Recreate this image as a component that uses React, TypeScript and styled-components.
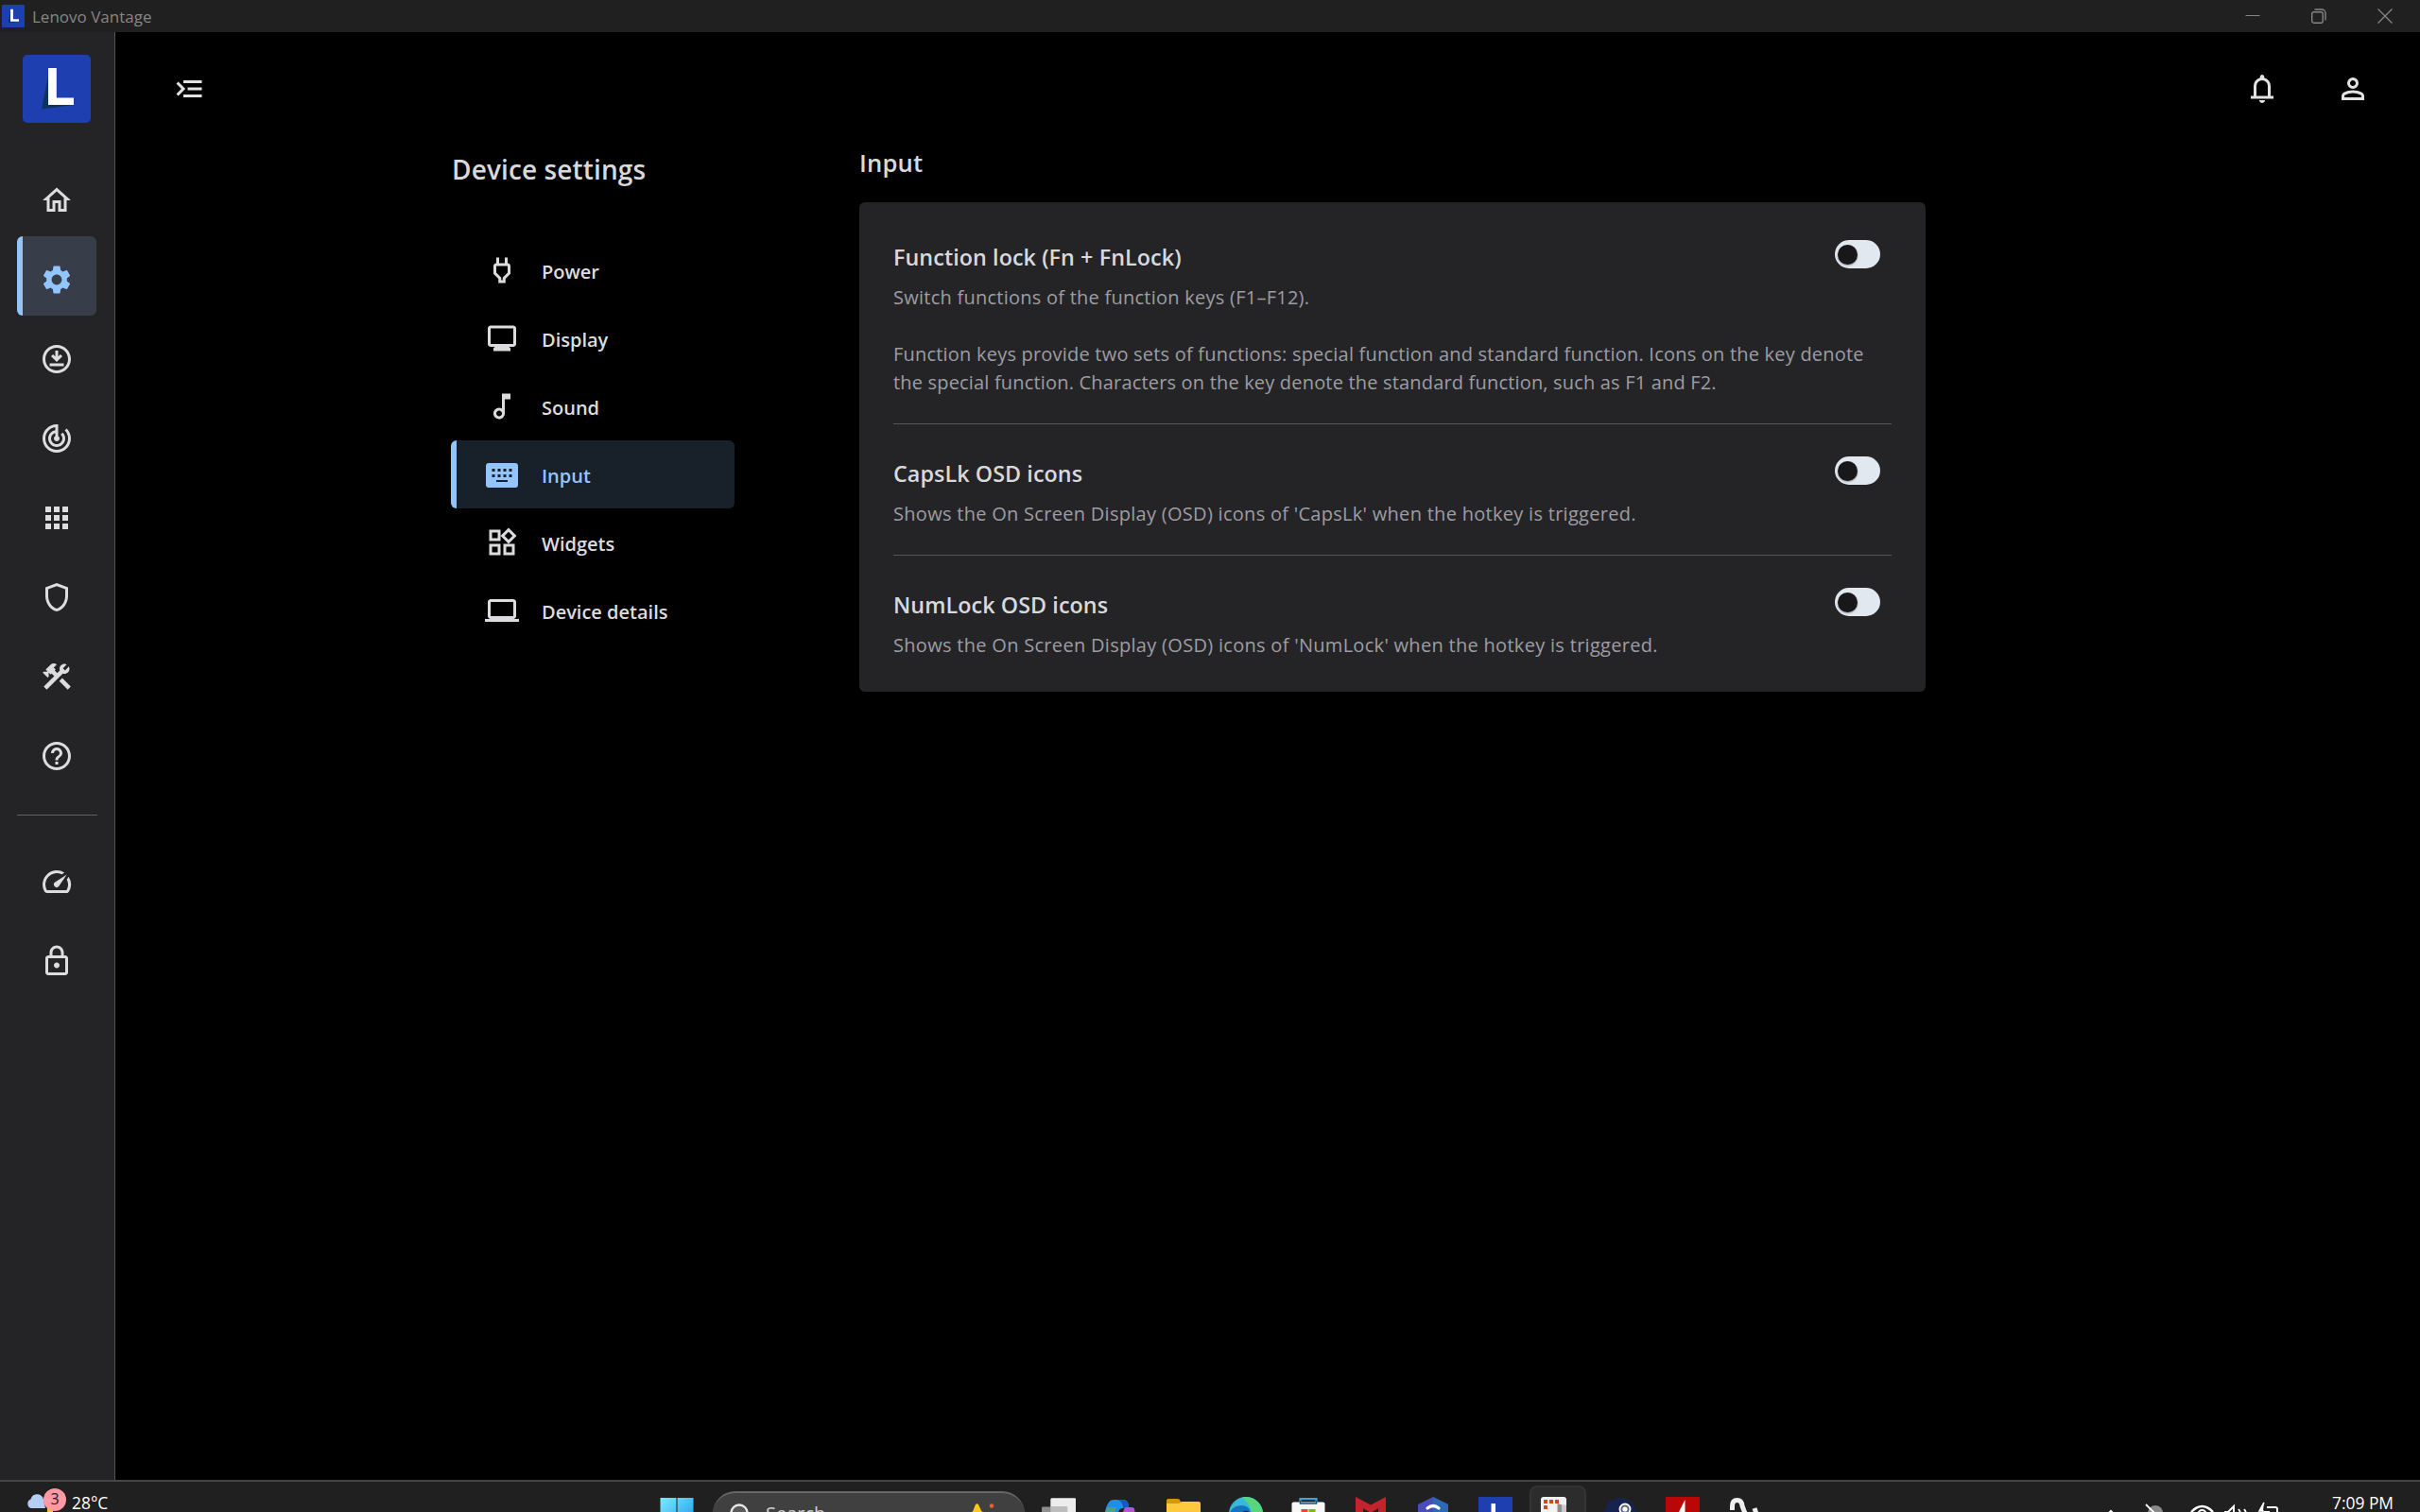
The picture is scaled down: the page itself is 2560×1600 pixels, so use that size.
import React from "react";
import styled, { createGlobalStyle, css } from "styled-components";
import {
  MdOutlineHome,
  MdSettings,
  MdOutlineDownloadForOffline,
  MdTrackChanges,
  MdApps,
  MdOutlineShield,
  MdOutlineConstruction,
  MdHelpOutline,
  MdMenuOpen,
  MdOutlinePower,
  MdOutlineMonitor,
  MdOutlineMusicNote,
  MdOutlineWidgets,
  MdOutlineLaptop,
} from "react-icons/md";

const GlobalStyle = createGlobalStyle`
  * { box-sizing: border-box; }
  body {
    margin: 0;
    background: #000;
    font-family: "Open Sans", "Noto Sans", sans-serif;
    overflow: hidden;
  }
`;

/* ---------- shell ---------- */

const Desktop = styled.div`
  width: 2560px;
  height: 1600px;
  display: flex;
  flex-direction: column;
  background: #000;
  color: #d9d9dc;
  overflow: hidden;
`;

const TitleBar = styled.header`
  flex: 0 0 34px;
  display: flex;
  align-items: center;
  justify-content: space-between;
  background: #202020;
  padding: 0 29px 0 2px;
`;

const TitleGroup = styled.div`
  display: flex;
  align-items: center;
  gap: 8px;
`;

const TitleText = styled.span`
  font-size: 17px;
  line-height: 32px;
  padding-top: 2px;
  color: #868686;
`;

const WindowControls = styled.div`
  display: flex;
  align-items: center;
  gap: 54px;
`;

const Body = styled.div`
  flex: 1;
  display: flex;
  min-height: 0;
`;

/* ---------- rail ---------- */

const Rail = styled.nav`
  flex: 0 0 122px;
  background: #242427;
  border-right: 1px solid #525254;
  display: flex;
  flex-direction: column;
  align-items: flex-start;
  padding: 24px 0 0 18px;
`;

const LogoTile = styled.div<{ $size: number; $radius: number }>`
  width: ${(p) => p.$size}px;
  height: ${(p) => p.$size}px;
  border-radius: ${(p) => p.$radius}px;
  background: #1e3faf;
  overflow: hidden;
  flex: none;

  svg {
    display: block;
  }
`;

const RailLogo = styled.div`
  padding: 0 6px;
  margin-bottom: 36px;
`;

const RailItem = styled.a<{ $active?: boolean }>`
  width: 84px;
  height: 84px;
  display: flex;
  align-items: center;
  justify-content: center;
  padding-top: 8px;
  border-radius: 6px;
  color: ${(p) => (p.$active ? "#93c5fd" : "#dddde0")};
  ${(p) =>
    p.$active &&
    css`
      background: linear-gradient(to right, #93c5fd 6px, #373e49 6px);
    `}
`;

const RailDivider = styled.hr`
  width: 85px;
  height: 1px;
  border: 0;
  margin: 24px 0;
  background: #606063;
`;

/* ---------- main ---------- */

const Main = styled.main`
  flex: 1;
  display: flex;
  flex-direction: column;
`;

const TopBar = styled.div`
  height: 120px;
  display: flex;
  align-items: center;
  justify-content: space-between;
  padding: 0 53px 0 60px;
  color: #e2e2e2;
`;

const MenuToggle = styled.span`
  display: flex;
  transform: scaleX(-1);
`;

const TopActions = styled.div`
  display: flex;
  gap: 60px;
`;

const Content = styled.div`
  display: flex;
  gap: 132px;
  padding-left: 355px;
`;

const SubNav = styled.aside`
  width: 300px;
  padding-top: 5px;
`;

const SubNavHeading = styled.h1`
  margin: 0 0 51px;
  padding-left: 1px;
  font-size: 28px;
  font-weight: 600;
  line-height: 40px;
  letter-spacing: 0.12px;
`;

const SubNavItem = styled.a<{ $active?: boolean }>`
  height: 72px;
  display: flex;
  align-items: center;
  gap: 24px;
  padding-left: 36px;
  border-radius: 6px;
  font-size: 20px;
  font-weight: 600;
  color: ${(p) => (p.$active ? "#93c5fd" : "#dcdcde")};
  ${(p) =>
    p.$active &&
    css`
      background: linear-gradient(to right, #93c5fd 6px, #182029 6px);
    `}

  span {
    padding-top: 3px;
  }
`;

const Panel = styled.section`
  width: 1128px;
`;

const PanelHeading = styled.h2`
  margin: 0 0 23px;
  padding: 1px 0 0;
  font-size: 25.6px;
  font-weight: 600;
  line-height: 36px;
  letter-spacing: 0.2px;
`;

const Card = styled.div`
  height: 518px;
  padding: 6px 36px 0;
  border-radius: 6px;
  background: #242427;
`;

const Setting = styled.div`
  display: flex;
  align-items: flex-start;
  justify-content: space-between;
  padding: 34px 0 28px;

  & + & {
    border-top: 1px solid #555558;
  }
`;

const SettingText = styled.div`
  flex: 1;
  width: 0;
  white-space: nowrap;
`;

const SettingTitle = styled.h3`
  margin: 0 0 10px;
  font-size: 23.3px;
  font-weight: 600;
  line-height: 36px;
  letter-spacing: 0.08px;
`;

const SettingLine = styled.p<{ $tracking: number; $gap?: boolean }>`
  margin: ${(p) => (p.$gap ? "30px 0 0" : "0")};
  font-size: 20px;
  line-height: 30px;
  letter-spacing: ${(p) => p.$tracking}px;
  color: #9d9da3;
`;

const Toggle = styled.button`
  flex: none;
  width: 48px;
  height: 30px;
  margin: 0 12px 0 0;
  padding: 0 3px;
  border: 0;
  border-radius: 15px;
  display: flex;
  align-items: center;
  background: #e2e8f0;
`;

const Knob = styled.span`
  width: 21px;
  height: 21px;
  border-radius: 50%;
  background: #18181b;
  box-shadow: 0 1px 2px rgba(0, 0, 0, 0.35);
`;

/* ---------- taskbar ---------- */

const Taskbar = styled.footer`
  flex: 0 0 34px;
  display: grid;
  grid-template-columns: 683px 1196px 1fr;
  background: #202020;
  border-top: 2px solid #454545;
  overflow: hidden;
`;

const Weather = styled.div`
  display: flex;
  align-items: flex-start;
  gap: 4px;
  padding: 12px 0 0 28px;
`;

const TaskText = styled.span`
  font-size: 17.4px;
  line-height: 20px;
  height: 20px;
  color: #fff;
`;

const TaskApps = styled.div`
  display: flex;
  align-items: flex-start;
`;

const TaskButton = styled.div<{ $open?: boolean }>`
  flex: none;
  width: ${(p) => (p.$open ? 60 : 66)}px;
  margin: ${(p) => (p.$open ? "4px 3px 0" : "4px 0 0")};
  height: 60px;
  display: flex;
  justify-content: center;
  padding-top: ${(p) => (p.$open ? 10 : 12)}px;
  border: ${(p) => (p.$open ? "2px solid #343434" : "0")};
  border-radius: 8px;
  background: ${(p) => (p.$open ? "#2c2c2c" : "transparent")};
`;

const SearchBox = styled.div`
  flex: none;
  width: 330px;
  height: 48px;
  margin: 10px 3px 0 5px;
  display: flex;
  align-items: flex-start;
  justify-content: space-between;
  padding: 11px 30px 0 18px;
  border-radius: 24px;
  border-top: 2px solid #666;
  background: #404040;
`;

const SearchField = styled.div`
  display: flex;
  gap: 10px;

  span {
    font-size: 20px;
    line-height: 22px;
    color: #d0d0d0;
  }
`;

const Tray = styled.div`
  display: flex;
  align-items: flex-start;
  justify-content: space-between;
  padding: 12px 28px 0 347px;
`;

/* ---------- drawings ---------- */

const LenovoMark = ({ size, radius }: { size: number; radius: number }) => (
  <LogoTile $size={size} $radius={radius}>
    <svg width={size} height={size} viewBox="0 0 72 72">
      <path d="M27 22 20 57.500 54 53 30 48Z" fill="#0b3560" />
      <path d="M27 14h8.800v31.500H54V53H27Z" fill="#fff" />
    </svg>
  </LogoTile>
);

/** Material Symbols glyph drawn on its 960-unit grid. */
const Symbol = ({ d }: { d: string }) => (
  <svg width="36" height="36" viewBox="0 -960 960 960" fill="currentColor">
    <path d={d} />
  </svg>
);

const BELL =
  "M160-200v-80h80v-280q0-83 50-147.500T420-792v-28q0-25 17.500-42.500T480-880t42.500 17.500T540-820v28q80 20 130 84.500T720-560v280h80v80H160ZM480-80q-33 0-56.500-23.500T400-160h160q0 33-23.500 56.500T480-80ZM320-280h320v-280q0-66-47-113t-113-47q-66 0-113 47t-47 113v280Z";
const PERSON =
  "M480-480q-66 0-113-47t-47-113q0-66 47-113t113-47q66 0 113 47t47 113q0 66-47 113t-113 47ZM160-160v-112q0-34 17.500-62.500T224-378q62-31 126-46.500T480-440q66 0 130 15.500T736-378q29 15 46.500 43.500T800-272v112H160Zm80-80h480v-32q0-11-5.500-20T700-306q-54-27-109-40.500T480-360q-56 0-111 13.500T260-306q-9 5-14.500 14t-5.500 20v32Zm240-320q33 0 56.500-23.500T560-640q0-33-23.500-56.500T480-720q-33 0-56.500 23.500T400-640q0 33 23.500 56.500T480-560Z";

const SpeedIcon = () => (
  <svg width="36" height="36" viewBox="0 0 24 24" fill="currentColor">
    <path d="M20.380 8.570l-1.230 1.850a8 8 0 0 1-.22 7.580H5.070A8 8 0 0 1 15.580 6.850l1.850-1.230A10 10 0 0 0 3.350 19a2 2 0 0 0 1.720 1h13.850a2 2 0 0 0 1.740-1 10 10 0 0 0-.27-10.440z" />
    <path d="M10.590 15.410a2 2 0 0 0 2.830 0l5.660-8.490-8.490 5.660a2 2 0 0 0 0 2.830z" />
  </svg>
);

const LockIcon = () => (
  <svg width="36" height="36" viewBox="0 0 24 24" fill="currentColor">
    <path d="M18 8h-1V6c0-2.760-2.240-5-5-5S7 3.240 7 6v2H6c-1.100 0-2 .9-2 2v10c0 1.100.9 2 2 2h12c1.100 0 2-.9 2-2V10c0-1.100-.9-2-2-2zM9 6c0-1.660 1.340-3 3-3s3 1.340 3 3v2H9V6zm9 14H6V10h12v10zm-6-3c1.100 0 2-.9 2-2s-.9-2-2-2-2 .9-2 2 .9 2 2 2z" />
  </svg>
);

const KeyboardIcon = () => (
  <svg width="36" height="36" viewBox="0 0 36 36">
    <rect x="1" y="6" width="34" height="26" rx="3" fill="#93c5fd" />
    {[7.5, 13.5, 19.5, 25.5].map((x) => (
      <React.Fragment key={x}>
        <rect x={x} y="12" width="3" height="3" fill="#182029" />
        <rect x={x} y="18" width="3" height="3" fill="#182029" />
      </React.Fragment>
    ))}
    <rect x="12" y="24" width="12" height="2" fill="#182029" />
  </svg>
);

const Minimize = () => (
  <svg width="16" height="16" viewBox="0 0 16 16" stroke="#868686" fill="none">
    <path d="M.5 7.500h15" />
  </svg>
);
const Restore = () => (
  <svg width="16" height="16" viewBox="0 0 16 16" stroke="#868686" fill="none" strokeWidth="1.400">
    <rect x="0.700" y="3.700" width="11.500" height="11.500" rx="2" />
    <path d="M3.500 1h7.500a4 4 0 0 1 4 4v7.500" />
  </svg>
);
const Close = () => (
  <svg width="16" height="16" viewBox="0 0 16 16" stroke="#868686" fill="none" strokeWidth="1.300">
    <path d="M.5.5l15 15M15.500.5l-15 15" />
  </svg>
);

const WeatherIcon = () => (
  <svg width="44" height="20" viewBox="0 0 44 20">
    <path d="M5 16a5 5 0 0 1-.5-9.500 7 7 0 0 1 13-1.500L20 16Z" fill="#b5cdf5" />
    <path d="M22 14l6 0 0 6-6 0Z" fill="#f2c12e" />
  </svg>
);

const WeatherWrap = styled.div`
  position: relative;
  display: flex;
`;

const Badge = styled.span`
  position: absolute;
  left: 18px;
  top: -5px;
  width: 24px;
  height: 24px;
  border-radius: 50%;
  background: #ff99a4;
  color: #1b1b1b;
  font-size: 16px;
  line-height: 23px;
  text-align: center;
`;

const StartIcon = () => (
  <svg width="36" height="36" viewBox="0 0 36 36">
    <defs>
      <linearGradient id="win" x1="0" y1="0" x2="1" y2="1">
        <stop offset="0" stopColor="#7deaff" />
        <stop offset="1" stopColor="#1494e8" />
      </linearGradient>
    </defs>
    <path d="M.5 1h17v16.500H.5ZM18.500 1h17v16.500h-17ZM.5 18.500h17V35H.5ZM18.500 18.500h17V35h-17Z" fill="url(#win)" />
  </svg>
);

const MagnifierIcon = () => (
  <svg width="28" height="28" viewBox="0 0 28 28" fill="#5a5a5a" stroke="#e8e8e8" strokeWidth="2.400">
    <circle cx="10" cy="10" r="8.500" />
    <path d="M16 16.500l8 8" />
  </svg>
);

const SparkleIcon = () => (
  <svg width="30" height="28" viewBox="0 0 30 28">
    <path d="M8 1q1.500-1.500 3 0l3.500 7.500 7 2v10H1V10.500l4-2Z" fill="#fbc91c" />
    <circle cx="25" cy="2.500" r="2.200" fill="#e8642c" />
  </svg>
);

const apps: { name: string; open?: boolean; art: React.ReactNode }[] = [
  {
    name: "task-view",
    art: (
      <>
        <rect x="9.300" y="1.200" width="27" height="30" rx="1.500" fill="#ededed" />
        <rect x="0" y="10.500" width="27" height="20" rx="1" fill="#8d8d8d" />
        <rect x="9.300" y="10.500" width="18" height="20" fill="#bdbdbd" />
      </>
    ),
  },
  {
    name: "copilot",
    art: (
      <>
        <path d="M0 22Q2 3 10 3h10q6 0 6 8l-7 1q-4 0-5 10Z" fill="#1c8fe6" />
        <path d="M0 22q.5-6 3-11h10q-2 4-2 11Z" fill="#4fa37c" />
        <path d="M14 3h6q5 0 6 8h-6q-1-7-6-8Z" fill="#1557c4" />
        <path d="M19.500 22q.5-11 4-11h6q3 0 3 5v6Z" fill="#b455d8" />
      </>
    ),
  },
  {
    name: "files",
    art: (
      <>
        <path d="M0 4q0-2 2-2h10q2 0 3 3v4H0Z" fill="#d9950c" />
        <path d="M0 7h13l3-2h18q2 0 2 2v20H0Z" fill="#fcc93f" />
      </>
    ),
  },
  {
    name: "edge",
    art: (
      <>
        <circle cx="18" cy="18" r="18" fill="#37b8dc" />
        <path d="M14 .5A18 18 0 0 1 36 18H24q0-8-10-17.500Z" fill="#57d67c" />
        <path d="M0 20Q2 9 14 9q9 1 9 9v4H0Z" fill="#1673c0" />
        <circle cx="18" cy="18.500" r="4" fill="#12304e" />
      </>
    ),
  },
  {
    name: "store",
    art: (
      <>
        <path d="M9.500 8V2.200h17V8" fill="none" stroke="#37a3dc" strokeWidth="2.200" />
        <rect x="0.500" y="5.500" width="35" height="28" rx="2" fill="#f7f7f7" />
        <path d="M9.500 4V7h17V4" fill="none" stroke="#174f7c" strokeWidth="1.600" />
        <rect x="10.500" y="13" width="7" height="7" fill="#ea4a1f" />
        <rect x="18.500" y="13" width="7" height="7" fill="#7fba00" />
      </>
    ),
  },
  {
    name: "security",
    art: <path d="M2 0l16 8.500L34 0v32H26V12l-8 5-8-5v20H2Z" fill="#c3242c" />,
  },
  {
    name: "hex",
    art: (
      <>
        <path d="M18 0l16 8v20l-16 8-16-8V8Z" fill="#4a4cb8" />
        <path d="M18 0l16 8v20L18 18Z" fill="#2b69b4" />
        <path d="M12 12q6-5 12 0" fill="none" stroke="#fff" strokeWidth="3.200" strokeLinecap="round" />
      </>
    ),
  },
  {
    name: "vantage",
    art: (
      <>
        <rect width="36" height="36" fill="#1e3faf" />
        <path d="M13.500 7h4.500v18h8v4H13.500Z" fill="#fff" />
      </>
    ),
  },
  {
    name: "snip",
    open: true,
    art: (
      <g transform="translate(-4.500 0)">
        <rect x="4.500" y="0" width="27" height="32" rx="3" fill="#f2f2f2" />
        <path d="M22 7l5 1.500V20h-5Z" fill="#8f8f8f" />
        <path d="M27 8l4.500 1v11H27Z" fill="#c9c9c9" />
        <path
          d="M7.500 3h4v4h-4ZM13.500 3h4v4h-4ZM19.500 3h4v4h-4ZM7.500 9h4v4h-4Z"
          fill="#cf4a1c"
        />
      </g>
    ),
  },
  {
    name: "steam",
    art: (
      <>
        <circle cx="18" cy="18" r="17" fill="#17224f" />
        <circle cx="23" cy="13" r="5.500" fill="#5d6680" stroke="#fff" strokeWidth="1.800" />
        <circle cx="23" cy="13" r="2.600" fill="#fff" />
      </>
    ),
  },
  {
    name: "red",
    art: (
      <>
        <rect width="36" height="36" fill="#b90708" />
        <path d="M20.500 3v17h-8.500Z" fill="#fff" />
      </>
    ),
  },
  {
    name: "runner",
    art: (
      <path
        d="M4.500 14V10q0-6.500 5-6.500t5.500 6l1.500 4q1 3 2 4M28 12l2 6"
        fill="none"
        stroke="#efefef"
        strokeWidth="5"
      />
    ),
  },
];

const TrayIcons = () => (
  <svg width="190" height="28" viewBox="0 0 190 28" fill="none" stroke="#fff" strokeWidth="2">
    <path d="M1 25l6-6 6 6" />
    <circle cx="54" cy="21" r="8" fill="#8a8a8a" stroke="none" />
    <path d="M44 12l14 14" strokeWidth="1.800" />
    <path d="M92 20q11.500-12 23 0" strokeWidth="2.400" />
    <circle cx="103.500" cy="22" r="4" />
    <path d="M127 20h4l6-6v14" />
    <path d="M142 17q3 4 2 8M148 17q3 4 2 8" strokeWidth="1.800" />
    <path d="M169 10l-5 9h4l-1 7" fill="#fff" strokeWidth="1.600" />
    <path d="M172 15h9q2 0 2 2v11M174 28v-8h-5" />
  </svg>
);

/* ---------- data ---------- */

const railPrimary = [
  MdOutlineHome,
  MdSettings,
  MdOutlineDownloadForOffline,
  MdTrackChanges,
  MdApps,
  MdOutlineShield,
  MdOutlineConstruction,
  MdHelpOutline,
];

const subNav: { label: string; icon: React.ReactNode; active?: boolean }[] = [
  { label: "Power", icon: <MdOutlinePower size={36} /> },
  { label: "Display", icon: <MdOutlineMonitor size={36} /> },
  { label: "Sound", icon: <MdOutlineMusicNote size={36} /> },
  { label: "Input", icon: <KeyboardIcon />, active: true },
  { label: "Widgets", icon: <MdOutlineWidgets size={36} /> },
  { label: "Device details", icon: <MdOutlineLaptop size={36} /> },
];

const settings: { title: string; lines: { text: string; tracking: number; gap?: boolean }[] }[] = [
  {
    title: "Function lock (Fn + FnLock)",
    lines: [
      { text: "Switch functions of the function keys (F1–F12).", tracking: 0.25 },
      {
        text: "Function keys provide two sets of functions: special function and standard function. Icons on the key denote",
        tracking: 0.21,
        gap: true,
      },
      {
        text: "the special function. Characters on the key denote the standard function, such as F1 and F2.",
        tracking: 0.18,
      },
    ],
  },
  {
    title: "CapsLk OSD icons",
    lines: [
      {
        text: "Shows the On Screen Display (OSD) icons of 'CapsLk' when the hotkey is triggered.",
        tracking: 0.29,
      },
    ],
  },
  {
    title: "NumLock OSD icons",
    lines: [
      {
        text: "Shows the On Screen Display (OSD) icons of 'NumLock' when the hotkey is triggered.",
        tracking: 0.3,
      },
    ],
  },
];

export default function App() {
  return (
    <Desktop>
      <GlobalStyle />
      <TitleBar>
        <TitleGroup>
          <LenovoMark size={24} radius={1} />
          <TitleText>Lenovo Vantage</TitleText>
        </TitleGroup>
        <WindowControls>
          <Minimize />
          <Restore />
          <Close />
        </WindowControls>
      </TitleBar>

      <Body>
        <Rail>
          <RailLogo>
            <LenovoMark size={72} radius={5} />
          </RailLogo>
          {railPrimary.map((Icon, i) => (
            <RailItem key={i} $active={Icon === MdSettings}>
              <Icon size={36} />
            </RailItem>
          ))}
          <RailDivider />
          <RailItem>
            <SpeedIcon />
          </RailItem>
          <RailItem>
            <LockIcon />
          </RailItem>
        </Rail>

        <Main>
          <TopBar>
            <MenuToggle>
              <MdMenuOpen size={36} />
            </MenuToggle>
            <TopActions>
              <Symbol d={BELL} />
              <Symbol d={PERSON} />
            </TopActions>
          </TopBar>

          <Content>
            <SubNav>
              <SubNavHeading>Device settings</SubNavHeading>
              {subNav.map((item) => (
                <SubNavItem key={item.label} $active={item.active}>
                  {item.icon}
                  <span>{item.label}</span>
                </SubNavItem>
              ))}
            </SubNav>

            <Panel>
              <PanelHeading>Input</PanelHeading>
              <Card>
                {settings.map((s) => (
                  <Setting key={s.title}>
                    <SettingText>
                      <SettingTitle>{s.title}</SettingTitle>
                      {s.lines.map((l) => (
                        <SettingLine key={l.text} $tracking={l.tracking} $gap={l.gap}>
                          {l.text}
                        </SettingLine>
                      ))}
                    </SettingText>
                    <Toggle>
                      <Knob />
                    </Toggle>
                  </Setting>
                ))}
              </Card>
            </Panel>
          </Content>
        </Main>
      </Body>

      <Taskbar>
        <Weather>
          <WeatherWrap>
            <WeatherIcon />
            <Badge>3</Badge>
          </WeatherWrap>
          <TaskText>28°C</TaskText>
        </Weather>
        <TaskApps>
          <TaskButton>
            <StartIcon />
          </TaskButton>
          <SearchBox>
            <SearchField>
              <MagnifierIcon />
              <span>Search</span>
            </SearchField>
            <SparkleIcon />
          </SearchBox>
          {apps.map((app) => (
            <TaskButton key={app.name} $open={app.open}>
              <svg width="36" height="36" viewBox="0 0 36 36">
                {app.art}
              </svg>
            </TaskButton>
          ))}
        </TaskApps>
        <Tray>
          <TrayIcons />
          <TaskText>7:09 PM</TaskText>
        </Tray>
      </Taskbar>
    </Desktop>
  );
}
